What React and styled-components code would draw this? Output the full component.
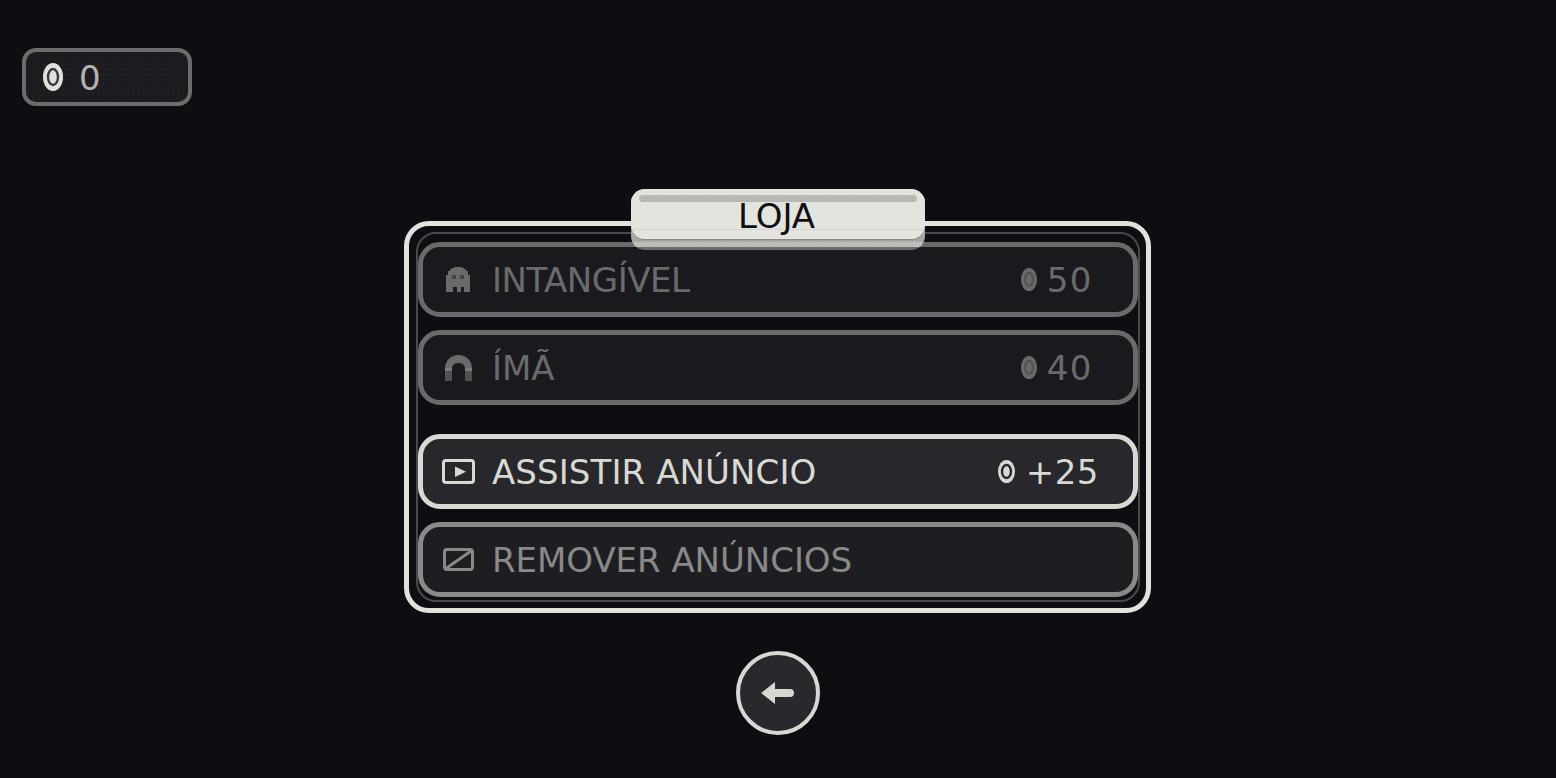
import styled, { createGlobalStyle } from "styled-components";

const GlobalStyle = createGlobalStyle`
  html, body {
    margin: 0;
    background: #0d0d12;
  }
  * {
    box-sizing: border-box;
  }
`;

const dots = (color) => `radial-gradient(${color} 0.6px, transparent 0.8px)`;

const Page = styled.div`
  height: 778px;
  overflow: hidden;
  padding: 48px 23px 0 22px;
  font-family: "DejaVu Sans", Verdana, sans-serif;
  background: #0d0d12;
`;

const Wallet = styled.div`
  width: 170px;
  height: 58px;
  display: flex;
  align-items: center;
  gap: 16px;
  padding-left: 17px;
  border: 4px solid #6c6c6c;
  border-radius: 14px;
  background-color: #1c1c20;
  background-image: ${dots("#2a2a2e")};
  background-size: 5px 5px;
  color: #b4b4b0;
  font-size: 34px;
`;

const Amount = styled.span`
  padding-top: 2px;
  opacity: 0.99;
`;

const Center = styled.div`
  display: flex;
  flex-direction: column;
  align-items: center;
  margin-top: 115px;
`;

const Panel = styled.div`
  position: relative;
  width: 747px;
  height: 392px;
  padding: 6px 6px 6px 7px;
  border: 5px solid #e2e2dc;
  border-radius: 25px;
  background: #0d0d12;
`;

const Frame = styled.div`
  height: 100%;
  padding: 8px 0 3px;
  border: 2px solid #4a4a4e;
  border-radius: 20px;
  display: flex;
  flex-direction: column;
  gap: 13px;
`;

const Title = styled.div`
  position: absolute;
  top: -37px;
  left: 222px;
  width: 294px;
  height: 61px;
  border-radius: 14px;
  background-color: #a4a4a0;
  background-image: ${dots("#bcbcb8")};
  background-size: 3px 3px;
`;

const TitleFace = styled.div`
  height: 50px;
  padding-top: 6px;
  border-radius: 14px;
  background: linear-gradient(#e4e4df 40px, #d6d6d0 40px, #d6d6d0 41px, #e4e4df 41px);
  box-shadow: 0 1px 0 #8c8c88;
`;

const TitleShine = styled.div`
  height: 7px;
  margin: 0 8px;
  border-radius: 4px;
  background-color: #b6b6b2;
  background-image: ${dots("#c8c8c4")};
  background-size: 3px 3px;
`;

const TitleText = styled.div`
  margin-top: -1px;
  padding-right: 3px;
  text-align: center;
  font-size: 34px;
  line-height: 30px;
  color: #0d0d12;
  opacity: 0.99;
`;

const Row = styled.div`
  height: 75px;
  flex: none;
  margin-top: ${(p) => p.$lift || 0}px;
  display: flex;
  align-items: center;
  padding-right: ${(p) => p.$right || 40}px;
  border: 5px solid #dcdcd6;
  border-radius: 22px;
  background: #28282d;
  color: #dcdcd6;
  opacity: ${(p) => p.$dim || 0.99};
`;

const IconSlot = styled.div`
  width: 69px;
  flex: none;
  display: flex;
  justify-content: center;
  padding-left: 1px;
`;

const Label = styled.div`
  flex: 1;
  font-size: 34px;
  letter-spacing: ${(p) => p.$track || 0}px;
  white-space: nowrap;
`;

const Price = styled.div`
  display: flex;
  align-items: center;
  gap: ${(p) => p.$gap || 10}px;
  font-size: 34px;
  letter-spacing: ${(p) => p.$track || 0}px;
`;

const BackButton = styled.button`
  width: 84px;
  height: 84px;
  margin-top: 38px;
  padding: 0;
  display: flex;
  align-items: center;
  justify-content: center;
  border: 4px solid #d8d8d2;
  border-radius: 50%;
  background: #28282d;
`;

function Coin({ w = 17, h = 23, color = "#dcdcd6", hole = "#28282d", ring = 4 }) {
  return (
    <svg width={w} height={h} viewBox={`0 0 ${w} ${h}`}>
      <ellipse cx={w / 2} cy={h / 2} rx={w / 2} ry={h / 2} fill={color} />
      <ellipse cx={w / 2} cy={h / 2} rx={w / 2 - ring} ry={h / 2 - ring - 1} fill="none" stroke={hole} strokeWidth="2.4" />
    </svg>
  );
}

function Ghost() {
  return (
    <svg width="24" height="25" viewBox="0 0 24 25" shapeRendering="crispEdges">
      <path
        fill="currentColor"
        d="M8 0h8v1h2v1h2v2h2v4h2v17h-6v-5h-3v5h-4v-5H7v5H0V8h2V4h2V2h2V1h2z"
      />
      <path fill="#28282d" opacity="0.5" d="M6 8h4v4H6zM14 8h4v4h-4z" />
    </svg>
  );
}

function Magnet() {
  return (
    <svg width="27" height="26" viewBox="0 0 27 26">
      <path
        d="M0 13.500C0 5.500 6 0 13.500 0S27 5.500 27 13.500h-7c0-3.500-2.800-5.500-6.500-5.500S7 10 7 13.500z"
        fill="currentColor"
      />
      <path d="M0 13h7v3H0zM20 13h7v3h-7z" fill="#ffffff" />
      <path d="M0 16h7v10H0zM20 16h7v10h-7z" fill="currentColor" opacity="0.7" />
    </svg>
  );
}

function Play() {
  return (
    <svg width="33" height="25" viewBox="0 0 33 25">
      <rect x="1.500" y="1.500" width="30" height="22" rx="2.500" fill="none" stroke="currentColor" strokeWidth="3" />
      <path d="M13 7.500L24 12.800L13 18z" fill="currentColor" />
    </svg>
  );
}

function NoAds() {
  return (
    <svg width="31" height="23" viewBox="0 0 31 23">
      <rect x="1.500" y="1.500" width="28" height="20" rx="2.500" fill="none" stroke="currentColor" strokeWidth="3" />
      <path d="M3 20.500L28 3" stroke="currentColor" strokeWidth="3" />
    </svg>
  );
}

function Arrow() {
  return (
    <svg width="33" height="22" viewBox="0 0 33 22">
      <path d="M0 11L14 0V7H29a4 4 0 0 1 0 8H14v7z" fill="#d8d8d2" />
    </svg>
  );
}

export default function App() {
  return (
    <Page>
      <GlobalStyle />
      <Wallet>
        <Coin w={20} h={28} color="#e2e2dc" hole="#3a3a3e" ring={5} />
        <Amount>0</Amount>
      </Wallet>
      <Center>
        <Panel>
          <Title>
            <TitleFace>
              <TitleShine />
              <TitleText>LOJA</TitleText>
            </TitleFace>
          </Title>
          <Frame>
            <Row $dim={0.45}>
              <IconSlot>
                <Ghost />
              </IconSlot>
              <Label $track={-0.5}>INTANGÍVEL</Label>
              <Price $track={1.5}>
                <Coin w={16} h={23} color="#dcdcd6" hole="#a8a8a6" />
                50
              </Price>
            </Row>
            <Row $dim={0.45}>
              <IconSlot>
                <Magnet />
              </IconSlot>
              <Label>ÍMÃ</Label>
              <Price $track={1.5}>
                <Coin w={16} h={23} color="#dcdcd6" hole="#a8a8a6" />
                40
              </Price>
            </Row>
            <Row $lift={16} $right={34}>
              <IconSlot>
                <Play />
              </IconSlot>
              <Label $track={0.1}>ASSISTIR ANÚNCIO</Label>
              <Price $gap={11} $track={0.5}>
                <Coin />
                +25
              </Price>
            </Row>
            <Row $dim={0.6}>
              <IconSlot>
                <NoAds />
              </IconSlot>
              <Label $track={-0.05}>REMOVER ANÚNCIOS</Label>
            </Row>
          </Frame>
        </Panel>
        <BackButton aria-label="Voltar">
          <Arrow />
        </BackButton>
      </Center>
    </Page>
  );
}
